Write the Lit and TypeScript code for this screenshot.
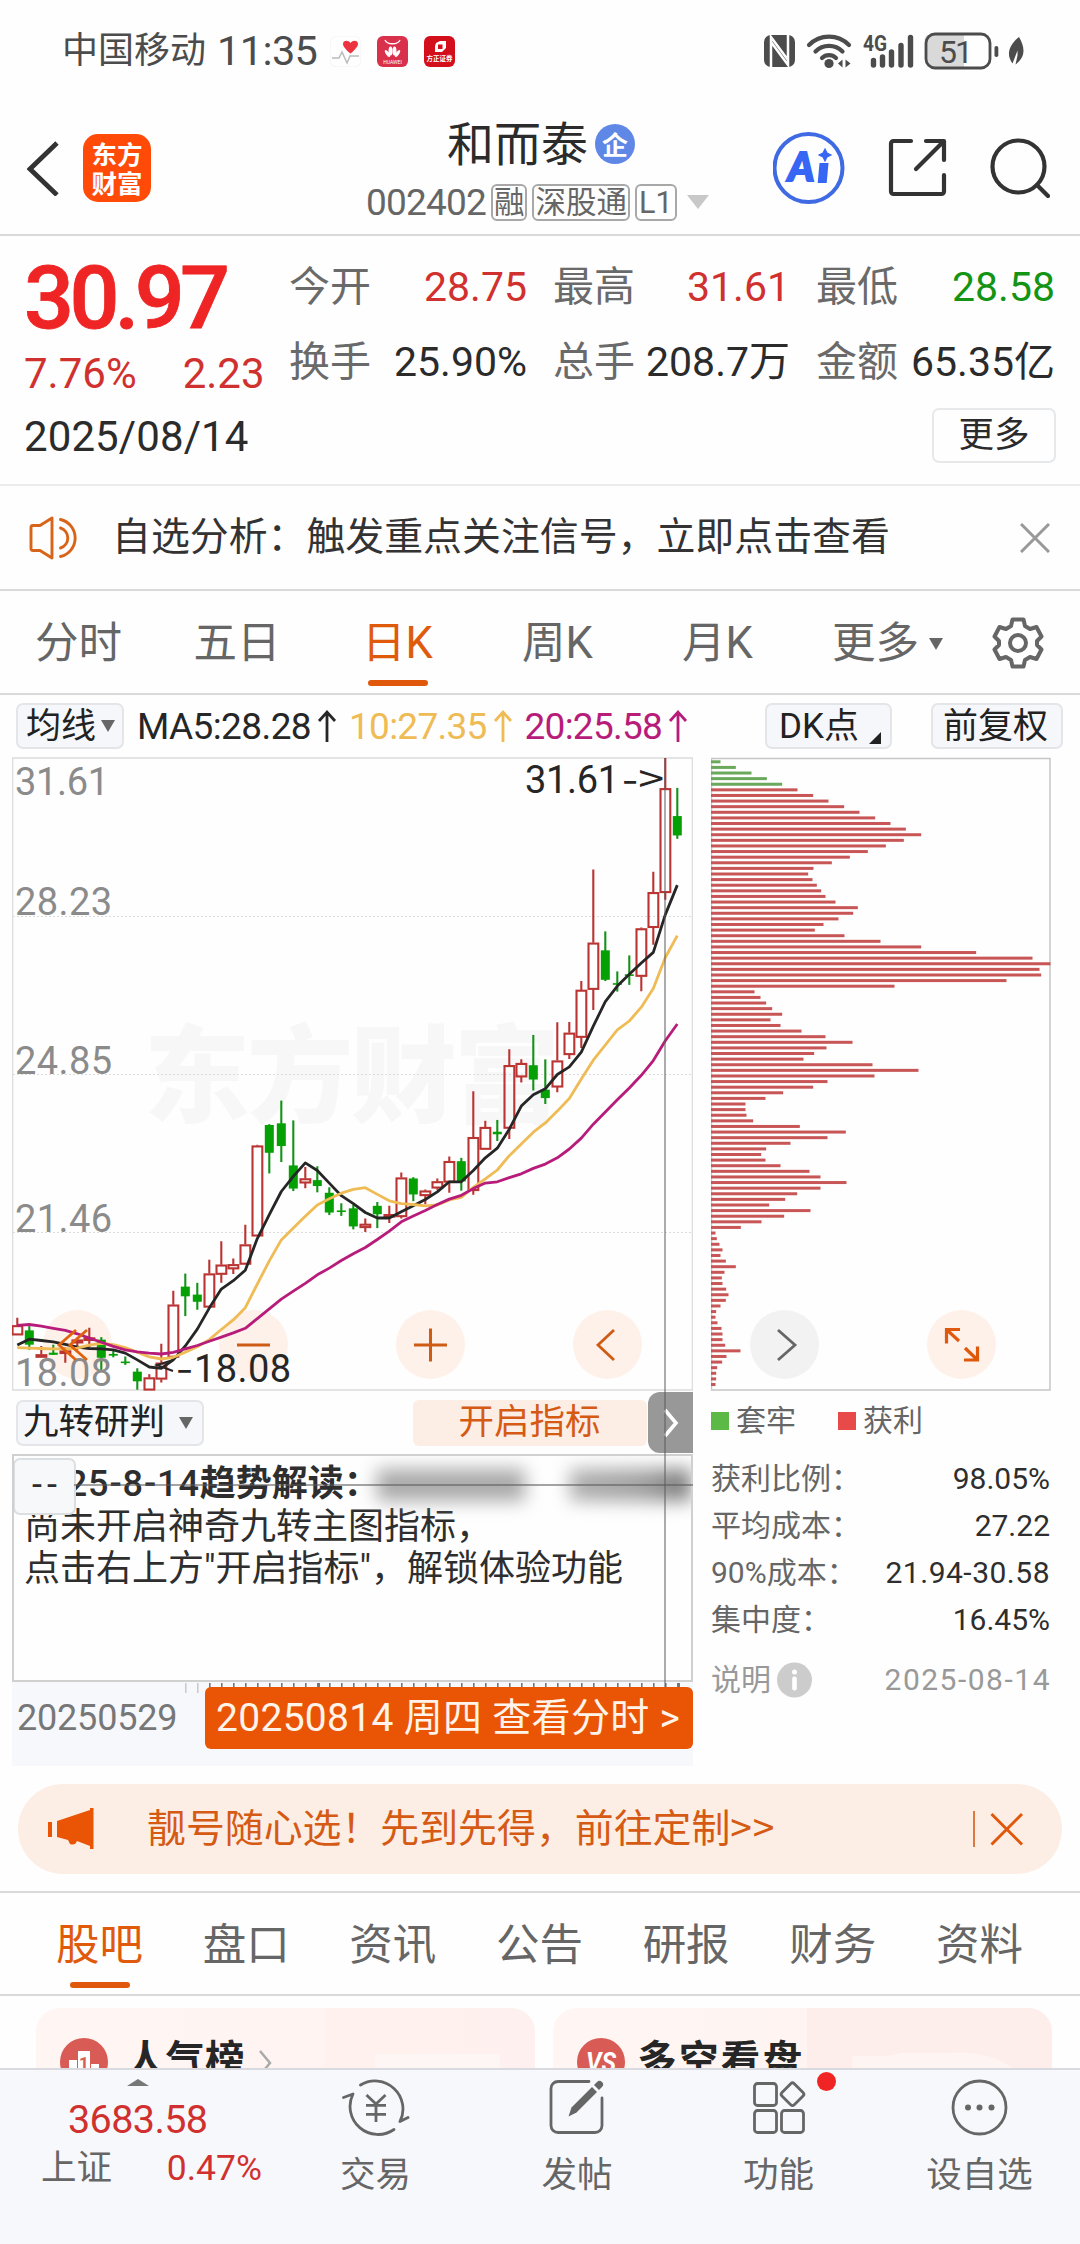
import { LitElement, html, css, svg } from "lit";
import { customElement, property } from "lit/decorators.js";

type Candle = [number, number, number, number, 0 | 1];

/* high, body top, body bottom, low, rising */
const CANDLES: Candle[] = [
  [1348, 1366, 1389, 1389, 1], [1368, 1378, 1412, 1424, 0], [1415, 1435, 1438, 1440, 1],
  [1412, 1431, 1436, 1436, 0], [1418, 1426, 1432, 1455, 1], [1395, 1400, 1408, 1425, 1],
  [1372, 1395, 1402, 1418, 1], [1394, 1400, 1443, 1472, 0], [1425, 1434, 1438, 1442, 0],
  [1440, 1452, 1455, 1460, 0], [1468, 1476, 1499, 1519, 0], [1482, 1490, 1520, 1520, 1],
  [1410, 1455, 1494, 1502, 1], [1284, 1317, 1442, 1445, 1], [1243, 1274, 1297, 1344, 0],
  [1265, 1293, 1310, 1329, 0], [1210, 1243, 1323, 1323, 1], [1166, 1222, 1245, 1265, 1],
  [1207, 1221, 1232, 1244, 1], [1127, 1174, 1221, 1221, 1], [937, 939, 1154, 1154, 1],
  [888, 890, 956, 1005, 0], [832, 886, 940, 978, 0], [879, 986, 1041, 1047, 0],
  [990, 1017, 1028, 1040, 1], [988, 1021, 1035, 1050, 0], [1038, 1051, 1098, 1104, 0],
  [1076, 1093, 1096, 1106, 0], [1080, 1088, 1131, 1138, 0], [1112, 1125, 1134, 1144, 1],
  [1073, 1082, 1102, 1135, 0], [1082, 1102, 1108, 1123, 1], [1003, 1015, 1108, 1112, 1],
  [1014, 1017, 1055, 1071, 0], [1043, 1046, 1058, 1078, 1], [1017, 1024, 1040, 1044, 1],
  [965, 976, 1026, 1051, 1], [968, 976, 1024, 1046, 0], [810, 919, 1046, 1056, 1],
  [880, 895, 948, 948, 1], [878, 906, 912, 928, 0], [710, 748, 898, 923, 1],
  [734, 743, 776, 789, 1], [676, 748, 782, 808, 0], [734, 806, 826, 840, 0],
  [646, 737, 800, 812, 1], [645, 671, 723, 733, 1], [548, 569, 682, 707, 1],
  [283, 457, 568, 617, 1], [430, 475, 545, 548, 0], [525, 553, 556, 573, 0],
  [487, 532, 535, 557, 0], [421, 423, 537, 572, 1], [288, 337, 421, 462, 1],
  [18, 90, 338, 355, 1], [89, 156, 202, 210, 0],
];

const MA5 = [
  1413, 1399, 1402, 1405, 1411, 1418, 1421, 1422, 1424, 1432, 1448, 1465, 1468, 1448, 1415, 1375,
  1325, 1280, 1260, 1235, 1160, 1103, 1048, 1012, 980, 998, 1028, 1058, 1077, 1098, 1111, 1111,
  1096, 1082, 1067, 1049, 1025, 1025, 998, 968, 945, 900, 845, 818, 804, 770, 752, 717, 655, 597,
  560, 532, 505, 480, 390, 320,
];
const MA10 = [
  1419, 1420, 1421, 1422, 1422, 1420, 1413, 1409, 1412, 1419, 1430, 1441, 1446, 1442, 1430, 1417,
  1400, 1376, 1353, 1324, 1268, 1213, 1163, 1135, 1107, 1080, 1065, 1052, 1043, 1039, 1055, 1070,
  1077, 1079, 1082, 1080, 1068, 1062, 1038, 1018, 997, 963, 935, 907, 885, 857, 827, 781, 736, 700,
  664, 643, 610, 566, 492, 440,
];
const MA20 = [
  1366, 1364, 1368, 1373, 1378, 1386, 1396, 1406, 1416, 1424, 1429, 1432, 1434, 1430, 1422, 1414,
  1404, 1394, 1384, 1373, 1350, 1327, 1304, 1285, 1266, 1246, 1230, 1212, 1196, 1181, 1162, 1142,
  1120, 1106, 1093, 1079, 1066, 1057, 1041, 1028, 1025, 1015, 1006, 993, 983, 968, 947, 921, 888,
  859, 830, 802, 772, 737, 690, 650,
];
const CHIPS = [
  90, 136, 183, 229, 275, 321, 368, 414, 461, 507, 554, 600, 646, 692, 640, 586, 532, 478, 424, 369,
  353, 366, 379, 392, 405, 435, 502, 488, 444, 399, 373, 462, 570, 692, 857, 1026, 1080, 1047, 1052,
  948, 612, 192, 210, 227, 245, 275, 240, 270, 333, 405, 486, 408, 371, 339, 546, 684, 552, 411, 368,
  278, 225, 165, 165, 168, 188, 328, 466, 411, 300, 227, 212, 225, 270, 357, 390, 468, 390, 320, 284,
  236, 360, 281, 213, 151, 75, 79, 87, 96, 90, 106, 136, 102, 94, 96, 107, 114, 106, 90, 77, 75, 81,
  93, 96, 96, 104, 150, 108, 95, 80, 77, 77, 75,
];

const px = (i: number) => 5.3 + i * 12;
const py = (v: number) => (v - 18) / 2.376 + 1;
const line = (s: number[]) => s.map((v, i) => `${px(i).toFixed(1)},${py(v).toFixed(1)}`).join(" ");

@customElement("k-chart")
class KChart extends LitElement {
  static styles = css`
    :host { display: block; height: 634px; }
    svg { display: block; }
    text { font-family: Roboto, "Noto Sans CJK SC", sans-serif; }
    .axis { fill: #8b8b8b; font-size: 38px; }
    .mark { fill: #262626; font-size: 38px; }
    .arrow { font-family: "Noto Sans CJK SC", sans-serif; }
    .wm { fill: #f7f7f7; font-size: 106px; font-weight: 900; font-family: "Noto Sans CJK SC", sans-serif; }
  `;
  render() {
    return html`<svg width="681" height="634" viewBox="0 0 681 634">
      <text class="wm" x="132" y="357" textLength="416">东方财富</text>
      <g stroke="#dcdcdc" stroke-width="1.2" stroke-dasharray="2 2">
        <path d="M1 159.5H680M1 317.5H680M1 475.5H680" />
      </g>
      <rect x="0.5" y="1" width="680" height="632" fill="none" stroke="#dedede" stroke-width="1.6" />
      ${CANDLES.map(([h, t, b, l, up], i) => {
        const x = px(i);
        const top = py(t), bot = py(b);
        return up
          ? svg`<path d="M${x} ${py(h)}V${top}M${x} ${bot}V${py(l)}" stroke="#b93432" stroke-width="2.1"/>
              <rect x=${x - 4.8} y=${top + 0.8} width="9.8" height=${Math.max(bot - top - 1.4, 1.6)}
                fill="none" stroke="#b93432" stroke-width="2.1"/>`
          : svg`<path d="M${x} ${py(h)}V${py(l)}" stroke="#14921a" stroke-width="2.1"/>
              <rect x=${x - 4.5} y=${top} width="9" height=${Math.max(bot - top, 1.6)} fill="#04a004"/>`;
      })}
      <g fill="none" stroke-width="2.8" stroke-linejoin="round">
        <polyline points=${line(MA5)} stroke="#262626" />
        <polyline points=${line(MA10)} stroke="#efbb55" />
        <polyline points=${line(MA20)} stroke="#b81c7a" />
      </g>
      <text class="axis" x="3" y="38" textLength="94">31.61</text>
      <text class="axis" x="3" y="158" textLength="97">28.23</text>
      <text class="axis" x="3" y="316.500" textLength="97">24.85</text>
      <text class="axis" x="3" y="474.500" textLength="97">21.46</text>
      <text class="axis" x="3" y="629" textLength="97">18.08</text>
      <text class="mark" x="513" y="36" textLength="94">31.61</text>
      <text class="mark arrow" x="610" y="36" textLength="42" lengthAdjust="spacingAndGlyphs">-&gt;</text>
      <path d="M161 614L145 608L161 603" fill="none" stroke="#262626" stroke-width="2" />
      <text class="mark arrow" x="164" y="625" textLength="17" lengthAdjust="spacingAndGlyphs">-</text>
      <text class="mark" x="182" y="624.500" textLength="97">18.08</text>
    </svg>`;
  }
}

@customElement("chip-chart")
class ChipChart extends LitElement {
  static styles = css`:host { display: block; height: 634px; } svg { display: block; }`;
  render() {
    return html`<svg width="340" height="634" viewBox="0 0 340 634">
      <rect x="0.5" y="1.500" width="338.500" height="631.500" fill="none" stroke="#c6c6c6" stroke-width="1.500" />
      ${CHIPS.map((w, i) => svg`<rect x="0" y=${3.3 + i * 5.61} width=${(w - 63) / 3 + 0.5} height="3"
        fill=${i < 5 ? "#6aa85c" : "#c85656"}/>`)}
    </svg>`;
  }
}

@customElement("nav-icon")
class NavIcon extends LitElement {
  @property() name = "";
  static styles = css`
    :host { display: block; width: 68px; height: 62px; }
    svg { display: block; }
  `;
  render() {
    const g = {
      trade: svg`<path d="M18.500 9A28 28 0 0 1 58 45.500L66 41.500M52 53.500A28 28 0 0 1 11 18L1.500 21.500"/>
        <path d="M24.500 19l9.500 9L43.500 19M24 29.300H44M24 38.300H44M34 28.500V46" stroke-linecap="butt"/>`,
      post: svg`<path d="M46 5.500H15a7 7 0 0 0-7 7V49.500a7 7 0 0 0 7 7H52a7 7 0 0 0 7-7V22"/>
        <path d="M25.500 40.500l3-9L49 11l5 5L33.500 36.500z" fill="#666" stroke="none"/>
        <path d="M51 9l3-3a3.300 3.300 0 0 1 5 5L56 14z" fill="#666" stroke="none"/>`,
      apps: svg`<rect x="9.500" y="7.500" width="22" height="22" rx="3"/><rect x="9.500" y="34.500" width="22" height="22" rx="3"/>
        <rect x="36.500" y="34.500" width="22" height="22" rx="3"/>
        <rect x="38.800" y="9.500" width="17.400" height="17.400" rx="2.500" transform="rotate(45 47.500 18.200)"/>`,
      more: svg`<circle cx="33.500" cy="31.500" r="26.500"/><g fill="#666" stroke="none"><circle cx="22" cy="31.500" r="3"/><circle cx="33.500" cy="31.500" r="3"/><circle cx="45.500" cy="31.500" r="3"/></g>`,
    }[this.name];
    return html`<svg width="68" height="62" viewBox="0 0 68 62" fill="none" stroke="#666" stroke-width="2.800"
      stroke-linecap="round" stroke-linejoin="round">${g}</svg>`;
  }
}

@customElement("app-root")
class AppRoot extends LitElement {
  static styles = css`
    :host {
      display: flex; flex-direction: column; width: 1080px; height: 2244px; overflow: hidden;
      background: #fefefe; color: #2b2b2b; white-space: nowrap; line-height: 1;
      font-family: Roboto, "Noto Sans CJK SC", sans-serif; box-sizing: border-box;
    }
    * { box-sizing: border-box; }
    svg { display: block; flex: none; }
    .row { display: flex; align-items: center; }
    .grow { flex: 1; }
    .red { color: #d0312f; }
    .green { color: #149414; }

    .status { height: 102px; padding: 0 54px 0 62px; color: #4c4c4c; }
    .carrier { font-size: 36px; width: 155px; }
    .clock { font-size: 41.5px; letter-spacing: -0.6px; width: 113px; }
    .apps { gap: 16px; }

    .header { height: 134px; padding: 0 30px 0 27px; border-bottom: 2px solid #dadada; }
    .logo {
      width: 68px; height: 68px; border-radius: 15px; background: #ff4a08; color: #fff; margin-left: 24px;
      font: 700 25.500px/29px "Noto Sans CJK SC", sans-serif; text-align: center; padding-top: 4px;
    }
    .title { flex: 1; display: flex; flex-direction: column; padding-left: 215px; height: 132px; padding-top: 17px; }
    .name { font-size: 47px; height: 50px; gap: 7px; margin-left: 81px; }
    .ent {
      width: 40px; height: 40px; border-radius: 50%; background: #5f87e6; color: #fff;
      font: 700 26px/39px "Noto Sans CJK SC", sans-serif; text-align: center;
    }
    .code { font-size: 37px; letter-spacing: -0.8px; color: #666; height: 40px; margin-top: 13px; }
    .tag {
      font-size: 30.500px; border: 2px solid #a8a8a8; border-radius: 6px; height: 37px; line-height: 33px;
      padding: 0 1px; margin-left: 5px; letter-spacing: 0;
    }
    .tag.l { padding: 0 2px; }
    .drop { margin-left: 10px; }
    .acts { gap: 42px; }

    .quote { height: 250px; border-bottom: 2px solid #ececec; display: grid; grid-template-columns: 265px 1fr; padding: 23px 23px 0 24px; }
    .price { font-size: 88px; font-weight: 500; color: #ef2424; letter-spacing: -4.6px; line-height: 78px; height: 79px; -webkit-text-stroke: 0.8px #ef2424; }
    .chg { font-size: 42px; height: 72px; gap: 46px; letter-spacing: 0; line-height: 72px; }
    .date { font-size: 42px; line-height: 54px; letter-spacing: 0.1px; }
    .stats { display: grid; grid-template-columns: 238px 237px 239px; column-gap: 26px; grid-auto-rows: 75px; font-size: 41px; padding-top: 2px; }
    .stat { display: flex; justify-content: space-between; align-items: center; height: 52px; letter-spacing: 0; }
    .stat .k { color: #6a6a6a; }
    .btnrow { display: flex; justify-content: flex-end; grid-column: 1 / -1; margin-right: -1px; margin-top: -3px; }
    .morebtn { width: 124px; height: 55px; border: 2px solid #e6e8ea; border-radius: 7px; font-size: 35.500px; line-height: 50px; text-align: center; }

    .notice { height: 105px; border-bottom: 2px solid #dadada; padding: 0 30px 0 29px; }
    .notice .msg { font-size: 38.900px; margin-left: 30px; flex: 1; color: #333; }

    .tabs { height: 104px; border-bottom: 2px solid #dadada; font-size: 43.500px; color: #666; display: grid; grid-template-columns: 157px 160px 161px 159px 161px 1fr 52px; align-items: center; padding: 2px 36px 0 0; }
    .tab { height: 100%; display: flex; align-items: center; justify-content: center; position: relative; gap: 10px; padding-top: 2px; }
    .tab.more { justify-content: flex-start; padding-left: 34px; }
    .tab.on { color: #e05a0c; }
    .tab.on::after { content: ""; position: absolute; left: 50%; bottom: 7px; width: 60px; margin-left: -30px; height: 6px; border-radius: 3px; background: #e0580c; }
    .tri { width: 0; height: 0; border: 7px solid transparent; border-bottom: 0; border-top: 12px solid #666; }

    .ma { height: 62px; padding: 0 17px 0 16px; font-size: 37px; }
    .pill { background: #f6f7fa; border: 2px solid #e4e5e8; border-radius: 7px; height: 46px; display: flex; align-items: center; font-size: 35px; color: #222; }
    .p1 { width: 108px; padding-left: 8px; gap: 5px; }
    .p3 { width: 127px; padding-left: 12px; gap: 10px; }
    .p3 svg { margin-top: 23px; }
    .p4 { width: 132px; padding-left: 10px; margin-left: 39px; }
    .ma .v { letter-spacing: -0.75px; display: flex; align-items: center; margin-left: 11px; }
    .ma .v.a { margin-left: 13px; color: #262626; letter-spacing: -0.6px; }
    .ma .v.b { color: #efbb55; }
    .ma .v.c { color: #b81c7a; }
    .ma .v svg { margin-left: 5px; }

    .main { display: grid; grid-template-columns: 681px 340px; column-gap: 18px; padding-left: 12px; height: 1009px; }
    .left, .right { position: relative; }
    k-chart { position: relative; }
    .ctrl { position: absolute; top: 553px; width: 69px; height: 69px; border-radius: 50%; background: #fef1ea; }
    .ctrl.gray { background: #f2f2f2; }
    .ctrl.clear { background: none; }
    .b0 { left: 31px; } .b1 { left: 207px; } .b2 { left: 384px; } .b3 { left: 561px; }
    .b4 { left: 39px; } .b5 { left: 216px; }
    .ind { height: 63px; padding: 0 0 0 4px; }
    .p2 { width: 188px; padding-left: 5px; gap: 14px; font-size: 35.500px; }
    .openbtn { margin-left: 209px; width: 234px; height: 46px; border-radius: 6px; background: #fdeee5; color: #d55a14; font-size: 35.500px; line-height: 44px; text-align: center; padding-right: 1px; }
    .fold { margin-left: 1px; width: 45px; height: 61px; background: #989898; border-radius: 12px 0 0 12px; display: flex; align-items: center; justify-content: center; }
    .note { height: 228px; border: 2px solid #d0d0d0; position: relative; padding: 8px 0 0 10px; font-size: 36px; line-height: 42px; color: #2e2e2e; overflow: hidden; }
    .note .h { font-weight: 700; height: 42px; display: flex; line-height: 40px; }
    .note .h .d { font-weight: 500; letter-spacing: 0.9px; width: 177px; }
    .note .h .c { width: 180px; }
    .veil { filter: blur(9px); background: #a9a9a9; height: 32px; width: 160px; margin: 5px 0 0 -3px; }
    .veil.s { width: 130px; margin-left: 45px; background: linear-gradient(90deg, #b0b0b0, #a0a0a0 60%, #777); }
    .badge { position: absolute; left: -1px; top: 2px; width: 63px; height: 57px; background: #f7f8fa; border: 2px solid #dcdfe2; border-radius: 7px; font-size: 36px; text-align: center; line-height: 50px; letter-spacing: 5px; padding-left: 5px; }
    .xaxis { height: 84px; background: #f7f8fb; position: relative; }
    .ticks { position: absolute; left: 0; top: 1px; }
    .dates { height: 72px; font-size: 36px; color: #777; padding-left: 5px; letter-spacing: -0.2px; justify-content: space-between; }
    .goto { position: relative; width: 488px; height: 62px; border-radius: 6px; background: #e95504; color: #fff3ea; font-size: 39px; line-height: 62px; padding-left: 11px; letter-spacing: 0.3px; }
    .vline { position: absolute; left: 652px; top: 1px; width: 2px; height: 929px; background: rgba(90, 90, 90, 0.5); }
    .hline { position: absolute; left: 62px; top: 727px; width: 619px; height: 2px; background: rgba(90, 90, 90, 0.55); }
    .legend { height: 60px; font-size: 30px; color: #666; margin-bottom: 4px; }
    .sq { width: 18px; height: 18px; margin-right: 7px; background: #5cb946; }
    .sq.r { background: #e84a4a; margin-left: 42px; }
    .kv { height: 47px; font-size: 30px; display: flex; justify-content: space-between; align-items: center; color: #2e2e2e; width: 339px; }
    .kv .range { letter-spacing: 0.5px; }
    .kv.f { margin-top: 13px; }
    .kv.f .range { letter-spacing: 1.5px; margin-right: -1px; }
    .kv .k { color: #666; display: flex; align-items: center; gap: 6px; }
    .kv.f, .kv.f .k { color: #999; }

    .promo { margin: 18px 18px 17px; height: 90px; border-radius: 45px; background: #fceee5; color: #d55a14; font-size: 38.900px; padding: 0 38px 0 29px; }
    .promo .t { margin-left: 52px; flex: 1; padding-bottom: 3px; }
    .gt { font-family: "Noto Sans CJK SC", sans-serif; letter-spacing: 0.8px; }
    .tabs2 { height: 105px; border-top: 2px solid #dadada; border-bottom: 2px solid #dadada; font-size: 43.500px; color: #666; padding: 1px 57px 0 56px; display: flex; justify-content: space-between; flex: none; }
    .tabs2 .tab { padding-top: 3px; }
    .tabs2 .tab.on::after { bottom: 6px; }
    .cards { display: flex; gap: 18px; padding: 12px 28px 0 36px; height: 72px; overflow: hidden; flex: none; }
    .card { width: 499px; height: 140px; flex: none; border-radius: 24px; background: linear-gradient(90deg, #fff6f4, #fef2f0); display: flex; padding: 30px 0 0 24px; position: relative; overflow: hidden; }
    .card .t { font-size: 39.500px; font-weight: 700; margin-left: 18px; line-height: 46px; color: #262626; position: relative; }
    .card .t.w { margin-left: 12px; letter-spacing: 2.4px; }
    .card > svg { position: relative; }
    .card .deco { position: absolute; right: 0; top: 0; }
    .card .go { margin: 12px 0 0 13px; }
    .bar { height: 176px; flex: none; border-top: 2px solid #d8dadf; background: #f7f8fb; display: grid; grid-template-columns: 275px 201px 202px 201px 201px; }
    .idx { position: relative; color: #d0312f; }
    .idx .up { position: absolute; left: 127px; top: 9px; width: 0; height: 0; border: 11px solid transparent; border-top: 0; border-bottom: 7px solid #777; }
    .idx .n { font-size: 39.500px; letter-spacing: -0.6px; margin: 29px 0 0 68px; height: 42px; line-height: 42px; }
    .idx .m { display: flex; justify-content: space-between; align-items: center; padding: 0 13px 0 41px; height: 46px; margin-top: 5px; font-size: 35.500px; }
    .idx .m .k { color: #666; }
    .nav { display: flex; flex-direction: column; align-items: center; font-size: 35.500px; color: #666; padding-top: 6px; position: relative; gap: 20px; }
    .dot { position: absolute; left: 139px; top: 2px; width: 19px; height: 19px; border-radius: 50%; background: #f02424; }
  `;

  private arrow(c: string) {
    return html`<svg width="22" height="34" viewBox="0 0 22 34" fill="none" stroke=${c} stroke-width="2.800"><path d="M11 33V3M3 12L11 3L19 12"/></svg>`;
  }
  private stat(k: string, v: string, c = "") {
    return html`<div class="stat"><span class="k">${k}</span><span class=${c}>${v}</span></div>`;
  }

  render() {
    return html`
      <div class="status row">
        <span class="carrier">中国移动</span><span class="clock">11:35</span>
        <div class="apps row">
          <svg width="31" height="31" viewBox="0 0 31 31"><rect width="31" height="31" rx="7" fill="#fefefe" stroke="#f3f3f3"/>
            <path d="M20.500 17.500C15 13 13 10 13 8c0-3.500 5-4.500 7.500-1C23 3.500 28 4.500 28 8c0 2-2 5-7.500 9.500z" fill="#ee3340"/>
            <path d="M2 22h7l3-6 5 11 3-7h9" fill="none" stroke="#bbb" stroke-width="1.500"/></svg>
          <svg width="31" height="31" viewBox="0 0 31 31"><rect width="31" height="31" rx="6" fill="#d9304c"/>
            <path d="M8 4c2 5 13 5 15 0" fill="none" stroke="#fff" stroke-width="1.300"/>
            <g fill="#fff"><ellipse cx="13.500" cy="15" rx="2" ry="4.500"/><ellipse cx="17.500" cy="15" rx="2" ry="4.500"/>
            <ellipse cx="10.500" cy="17.500" rx="1.600" ry="4" transform="rotate(-35 10.500 17.500)"/><ellipse cx="20.500" cy="17.500" rx="1.600" ry="4" transform="rotate(35 20.500 17.500)"/>
            <text x="15.500" y="27.500" font-size="5" text-anchor="middle">HUAWEI</text></g></svg>
          <svg width="31" height="31" viewBox="0 0 31 31"><rect width="31" height="31" rx="6" fill="#d40f1c"/>
            <path d="M12 7l4-2h6v7l-4 4h-7v-6z" fill="#fff"/><rect x="14" y="8.500" width="4.500" height="4.500" fill="#d40f1c"/>
            <text x="15.500" y="25" font-size="6.500" font-weight="700" text-anchor="middle" fill="#fff">方正证券</text></svg>
        </div>
        <div class="grow"></div>
        <svg width="263" height="40" viewBox="0 0 263 40">
          <rect x="1" y="4" width="31" height="32" rx="7" fill="#4c4c4c"/>
          <path d="M8 36V6L25 29M25 4V34L8 11" fill="none" stroke="#fefefe" stroke-width="2.500"/>
          <g fill="none" stroke="#4c4c4c" stroke-width="4.200" stroke-linecap="round"><path d="M46 14a28 28 0 0 1 40 0M52.500 20.500a19 19 0 0 1 27 0M59 27a10 10 0 0 1 14 0"/></g>
          <circle cx="66" cy="32.500" r="4.600" fill="#4c4c4c"/><path d="M75 32.500l4.500-4v8zM87.500 32.500l-5-4v8z" fill="#4c4c4c"/>
          <text x="100" y="20" font-size="22" font-weight="700" fill="#4c4c4c" textLength="24" lengthAdjust="spacingAndGlyphs">4G</text>
          <g stroke="#4c4c4c" stroke-width="5.400" stroke-linecap="round"><path d="M110.500 29.500V34M119.500 26V34M128.500 21V34M138 14.500V34M147.500 6.500V34"/></g>
          <path d="M164 4h37v32h-31a8 8 0 0 1-8-8v-16a8 8 0 0 1 2-8z" fill="#d9d9d9"/>
          <rect x="163" y="3" width="64" height="34" rx="9" fill="none" stroke="#4c4c4c" stroke-width="2.800"/>
          <rect x="231.500" y="15" width="3.800" height="11" rx="1.800" fill="#4c4c4c"/>
          <text x="176" y="31.500" font-size="32" fill="#4c4c4c" textLength="34">51</text>
          <path d="M256 6c6 10 7 20-3.500 27.500l2-9 0-5-5 13c-7-9-3-19 6.500-26.500z" fill="#4c4c4c"/>
        </svg>
      </div>

      <div class="header row">
        <svg width="32" height="56" viewBox="0 0 32 56"><path d="M30 3L3 29L30 55" fill="none" stroke="#333" stroke-width="4.800"/></svg>
        <div class="logo">东方<br />财富</div>
        <div class="title">
          <div class="name row"><span>和而泰</span><span class="ent">企</span></div>
          <div class="code row"><span>002402</span><span class="tag">融</span><span class="tag">深股通</span><span class="tag l">L1</span>
            <svg class="drop" width="22" height="14" viewBox="0 0 22 14"><path d="M0 0H22L11 14z" fill="#c8c8c8"/></svg></div>
        </div>
        <div class="acts row">
          <svg width="73" height="72" viewBox="0 0 73 72"><circle cx="35.500" cy="36" r="34" fill="none" stroke="#3f6ae4" stroke-width="4"/>
            <text x="15" y="48.500" font-size="40" font-weight="900" font-style="italic" fill="#3766f4" stroke="#3766f4" stroke-width="2" font-family="Lato, Roboto, sans-serif">A</text>
            <path d="M46.500 31h9l-1.800 20h-9z" fill="#3766f4"/><path d="M52 17l2 4 4 2-4 2-2 4-2-4-4-2 4-2z" fill="#3766f4" stroke="#3766f4" stroke-width="1.200"/></svg>
          <svg width="60" height="60" viewBox="0 0 60 60" fill="none" stroke="#333" stroke-width="4.200" stroke-linecap="round" stroke-linejoin="round">
            <path d="M23 3H5.500a2.500 2.500 0 0 0-2.500 2.500V53.500a2.500 2.500 0 0 0 2.500 2.500H53.500a2.500 2.500 0 0 0 2.500-2.500V37M38 3H56V22M55 4L28 31"/></svg>
          <svg width="60" height="60" viewBox="0 0 60 60" fill="none" stroke="#333" stroke-width="4.200" stroke-linecap="round"><circle cx="28.500" cy="28.500" r="26"/><path d="M47 47L58 58"/></svg>
        </div>
      </div>

      <div class="quote">
        <div>
          <div class="price">30.97</div>
          <div class="chg row red"><span>7.76%</span><span>2.23</span></div>
          <div class="date">2025/08/14</div>
        </div>
        <div class="stats">
          ${this.stat("今开", "28.75", "red")}${this.stat("最高", "31.61", "red")}${this.stat("最低", "28.58", "green")}
          ${this.stat("换手", "25.90%")}${this.stat("总手", "208.7万")}${this.stat("金额", "65.35亿")}
          <div class="btnrow"><div class="morebtn">更多</div></div>
        </div>
      </div>

      <div class="notice row">
        <svg width="53" height="44" viewBox="0 0 53 44" fill="none" stroke="#d8641a" stroke-width="2.900" stroke-linejoin="round" stroke-linecap="round">
          <path d="M2 11.500q0-2 2-2H11L23 2V42L11 34.500H4q-2 0-2-2zM31.500 3.500a19 19 0 0 1 0 37M31.500 12a10.500 10.500 0 0 1 0 20"/></svg>
        <span class="msg">自选分析：触发重点关注信号，立即点击查看</span>
        <svg width="30" height="30" viewBox="0 0 30 30"><path d="M1 1L29 29M29 1L1 29" stroke="#999" stroke-width="3"/></svg>
      </div>

      <div class="tabs">
        <span class="tab">分时</span><span class="tab">五日</span><span class="tab on">日K</span><span class="tab">周K</span><span class="tab">月K</span>
        <span class="tab more">更多<i class="tri"></i></span>
        <svg width="52" height="52" viewBox="0 0 52 52" fill="none" stroke="#666" stroke-width="4" stroke-linejoin="round">
          <path d="M20.500 2.500h11l1.500 6.500 5 3 6.500-2 5 9.500-4.500 4.500v4l4.500 4.500-5 9.500-6.500-2-5 3-1.500 6.500h-11l-1.500-6.500-5-3-6.500 2-5-9.500 4.500-4.500v-4l-4.500-4.500 5-9.500 6.500 2 5-3z"/><circle cx="26" cy="26" r="8"/></svg>
      </div>

      <div class="ma row">
        <div class="pill p1">均线<i class="tri"></i></div>
        <span class="v a">MA5:28.28${this.arrow("#262626")}</span>
        <span class="v b">10:27.35${this.arrow("#efbb55")}</span>
        <span class="v c">20:25.58${this.arrow("#b81c7a")}</span>
        <div class="grow"></div>
        <div class="pill p3">DK点<svg width="12" height="12" viewBox="0 0 12 12"><path d="M12 0V12H0z" fill="#222"/></svg></div>
        <div class="pill p4">前复权</div>
      </div>

      <div class="main">
        <div class="left">
          <div class="ctrl b0"></div>
          <div class="ctrl b1"><svg width="69" height="69" viewBox="0 0 69 69"><path d="M18 35H51" stroke="#cf5c14" stroke-width="3"/></svg></div>
          <div class="ctrl b2"><svg width="69" height="69" viewBox="0 0 69 69"><path d="M18 35H51M34.500 18.500V51.500" stroke="#cf5c14" stroke-width="3"/></svg></div>
          <div class="ctrl b3"><svg width="69" height="69" viewBox="0 0 69 69"><path d="M41 20L25 35L41 50" fill="none" stroke="#cf5c14" stroke-width="2.800"/></svg></div>
          <k-chart></k-chart>
          <div class="ctrl clear b0"><svg width="69" height="69" viewBox="0 0 69 69" fill="none" stroke="#e0620c" stroke-width="2.800"><path d="M33 20L16 35L33 50M44 20L27 35L44 50"/></svg></div>
          <div class="ind row">
            <div class="pill p2">九转研判<i class="tri"></i></div>
            <div class="openbtn">开启指标</div>
            <div class="fold"><svg width="18" height="30" viewBox="0 0 18 30"><path d="M3 2L14 15L3 28" fill="none" stroke="#fff" stroke-width="3.600"/></svg></div>
          </div>
          <div class="note">
            <div class="h"><span class="d">2025-8-14</span><span class="c">趋势解读：</span><i class="veil"></i><i class="veil s"></i></div>
            <div>尚未开启神奇九转主图指标，</div>
            <div>点击右上方"开启指标"，解锁体验功能</div>
            <div class="badge">--</div>
          </div>
          <div class="xaxis">
            <svg class="ticks" width="681" height="10" viewBox="0 0 681 10">${Array.from({ length: 42 }, (_, i) =>
              svg`<rect x=${173 + i * 12} y="0" width=${i === 11 || i === 41 ? 3 : 1.6} height="10" fill=${i < 2 ? "#ccc" : "#777"}/>`)}</svg>
            <div class="dates row"><span>20250529</span><div class="goto">20250814 周四 查看分时 &gt;</div></div>
          </div>
          <div class="vline"></div><div class="hline"></div>
        </div>
        <div class="right">
          <chip-chart></chip-chart>
          <div class="ctrl gray b4"><svg width="69" height="69" viewBox="0 0 69 69"><path d="M28 20L45 35L28 50" fill="none" stroke="#666" stroke-width="2.800"/></svg></div>
          <div class="ctrl b5"><svg width="69" height="69" viewBox="0 0 69 69" fill="none" stroke="#e0580c" stroke-width="3.200"><path d="M33 19.500H19.500V33.500M20 20L32 31M37 50H50.500V36.500M50 49.500L38 38"/></svg></div>
          <div class="legend row"><i class="sq"></i>套牢<i class="sq r"></i>获利</div>
          <div class="kv"><span class="k">获利比例：</span><span>98.05%</span></div>
          <div class="kv"><span class="k">平均成本：</span><span>27.22</span></div>
          <div class="kv"><span class="k">90%成本：</span><span class="range">21.94-30.58</span></div>
          <div class="kv"><span class="k">集中度：</span><span>16.45%</span></div>
          <div class="kv f"><span class="k">说明<svg width="35" height="36" viewBox="0 0 35 36"><circle cx="17.500" cy="18" r="17.500" fill="#ccc"/><circle cx="17.500" cy="10" r="2.500" fill="#fff"/><rect x="15.200" y="14.500" width="4.600" height="14" rx="2" fill="#fff"/></svg></span><span class="range">2025-08-14</span></div>
        </div>
      </div>

      <div class="promo row">
        <svg width="48" height="42" viewBox="0 0 48 42" fill="#e95504"><rect x="1" y="14" width="4" height="15"/><path d="M10 13L43 2V0H46.500V41H43V38L30 33q-2 5-7 3l-2-4-11-3z"/></svg>
        <span class="t">靓号随心选！先到先得，前往定制<span class="gt">&gt;&gt;</span></span>
        <svg width="51" height="38" viewBox="0 0 51 38"><path d="M1 1V37" stroke="#d55a14" stroke-width="1.600"/><path d="M18.500 4L49 34.500M49 4L18.500 34.500" stroke="#e0580c" stroke-width="3"/></svg>
      </div>

      <div class="tabs2">
        ${["股吧", "盘口", "资讯", "公告", "研报", "财务", "资料"].map((t, i) => html`<span class="tab ${i ? "" : "on"}">${t}</span>`)}
      </div>

      <div class="cards">
        <div class="card">
          <svg class="deco" width="260" height="140" viewBox="0 0 260 140"><path d="M50 0H260V140H0V60H50z" fill="#feefed" opacity="0.7"/><path d="M100 46H225V140H100z" fill="#fef6f4"/><path d="M122 104H202V140H122z" fill="#fdeae8"/></svg>
          <svg width="48" height="48" viewBox="0 0 48 48"><circle cx="24" cy="24" r="24" fill="#d95b55"/><g fill="#fff"><rect x="9" y="22" width="8" height="16"/><rect x="18" y="13" width="12" height="25"/><rect x="31" y="26" width="8" height="12"/></g><text x="24" y="31" font-size="17" font-weight="700" text-anchor="middle" fill="#d95b55">1</text></svg>
          <span class="t">人气榜</span>
          <svg class="go" width="14" height="26" viewBox="0 0 14 26"><path d="M2 1L12 13L2 25" fill="none" stroke="#aaa" stroke-width="2.500"/></svg>
        </div>
        <div class="card">
          <svg class="deco" width="260" height="140" viewBox="0 0 260 140"><path d="M15 0H260V140H15z" fill="#fdecea" opacity="0.8"/><path d="M60 48H95L110 45H160Q250 40 250 140H60z" fill="#fef4f2"/><path d="M90 82H112V140H90zM140 82Q210 62 215 140H140z" fill="#fce8e6"/></svg>
          <svg width="48" height="48" viewBox="0 0 48 48"><circle cx="24" cy="24" r="24" fill="#d95b55"/><text x="24" y="34" font-size="28" font-weight="700" font-style="italic" text-anchor="middle" fill="#fff" textLength="30" lengthAdjust="spacingAndGlyphs">VS</text></svg>
          <span class="t w">多空看盘</span>
        </div>
      </div>

      <div class="bar">
        <div class="idx"><i class="up"></i><div class="n">3683.58</div><div class="m"><span class="k">上证</span><span>0.47%</span></div></div>
        <div class="nav"><nav-icon name="trade"></nav-icon>交易</div>
        <div class="nav"><nav-icon name="post"></nav-icon>发帖</div>
        <div class="nav"><nav-icon name="apps"></nav-icon>功能<i class="dot"></i></div>
        <div class="nav"><nav-icon name="more"></nav-icon>设自选</div>
      </div>
    `;
  }
}
